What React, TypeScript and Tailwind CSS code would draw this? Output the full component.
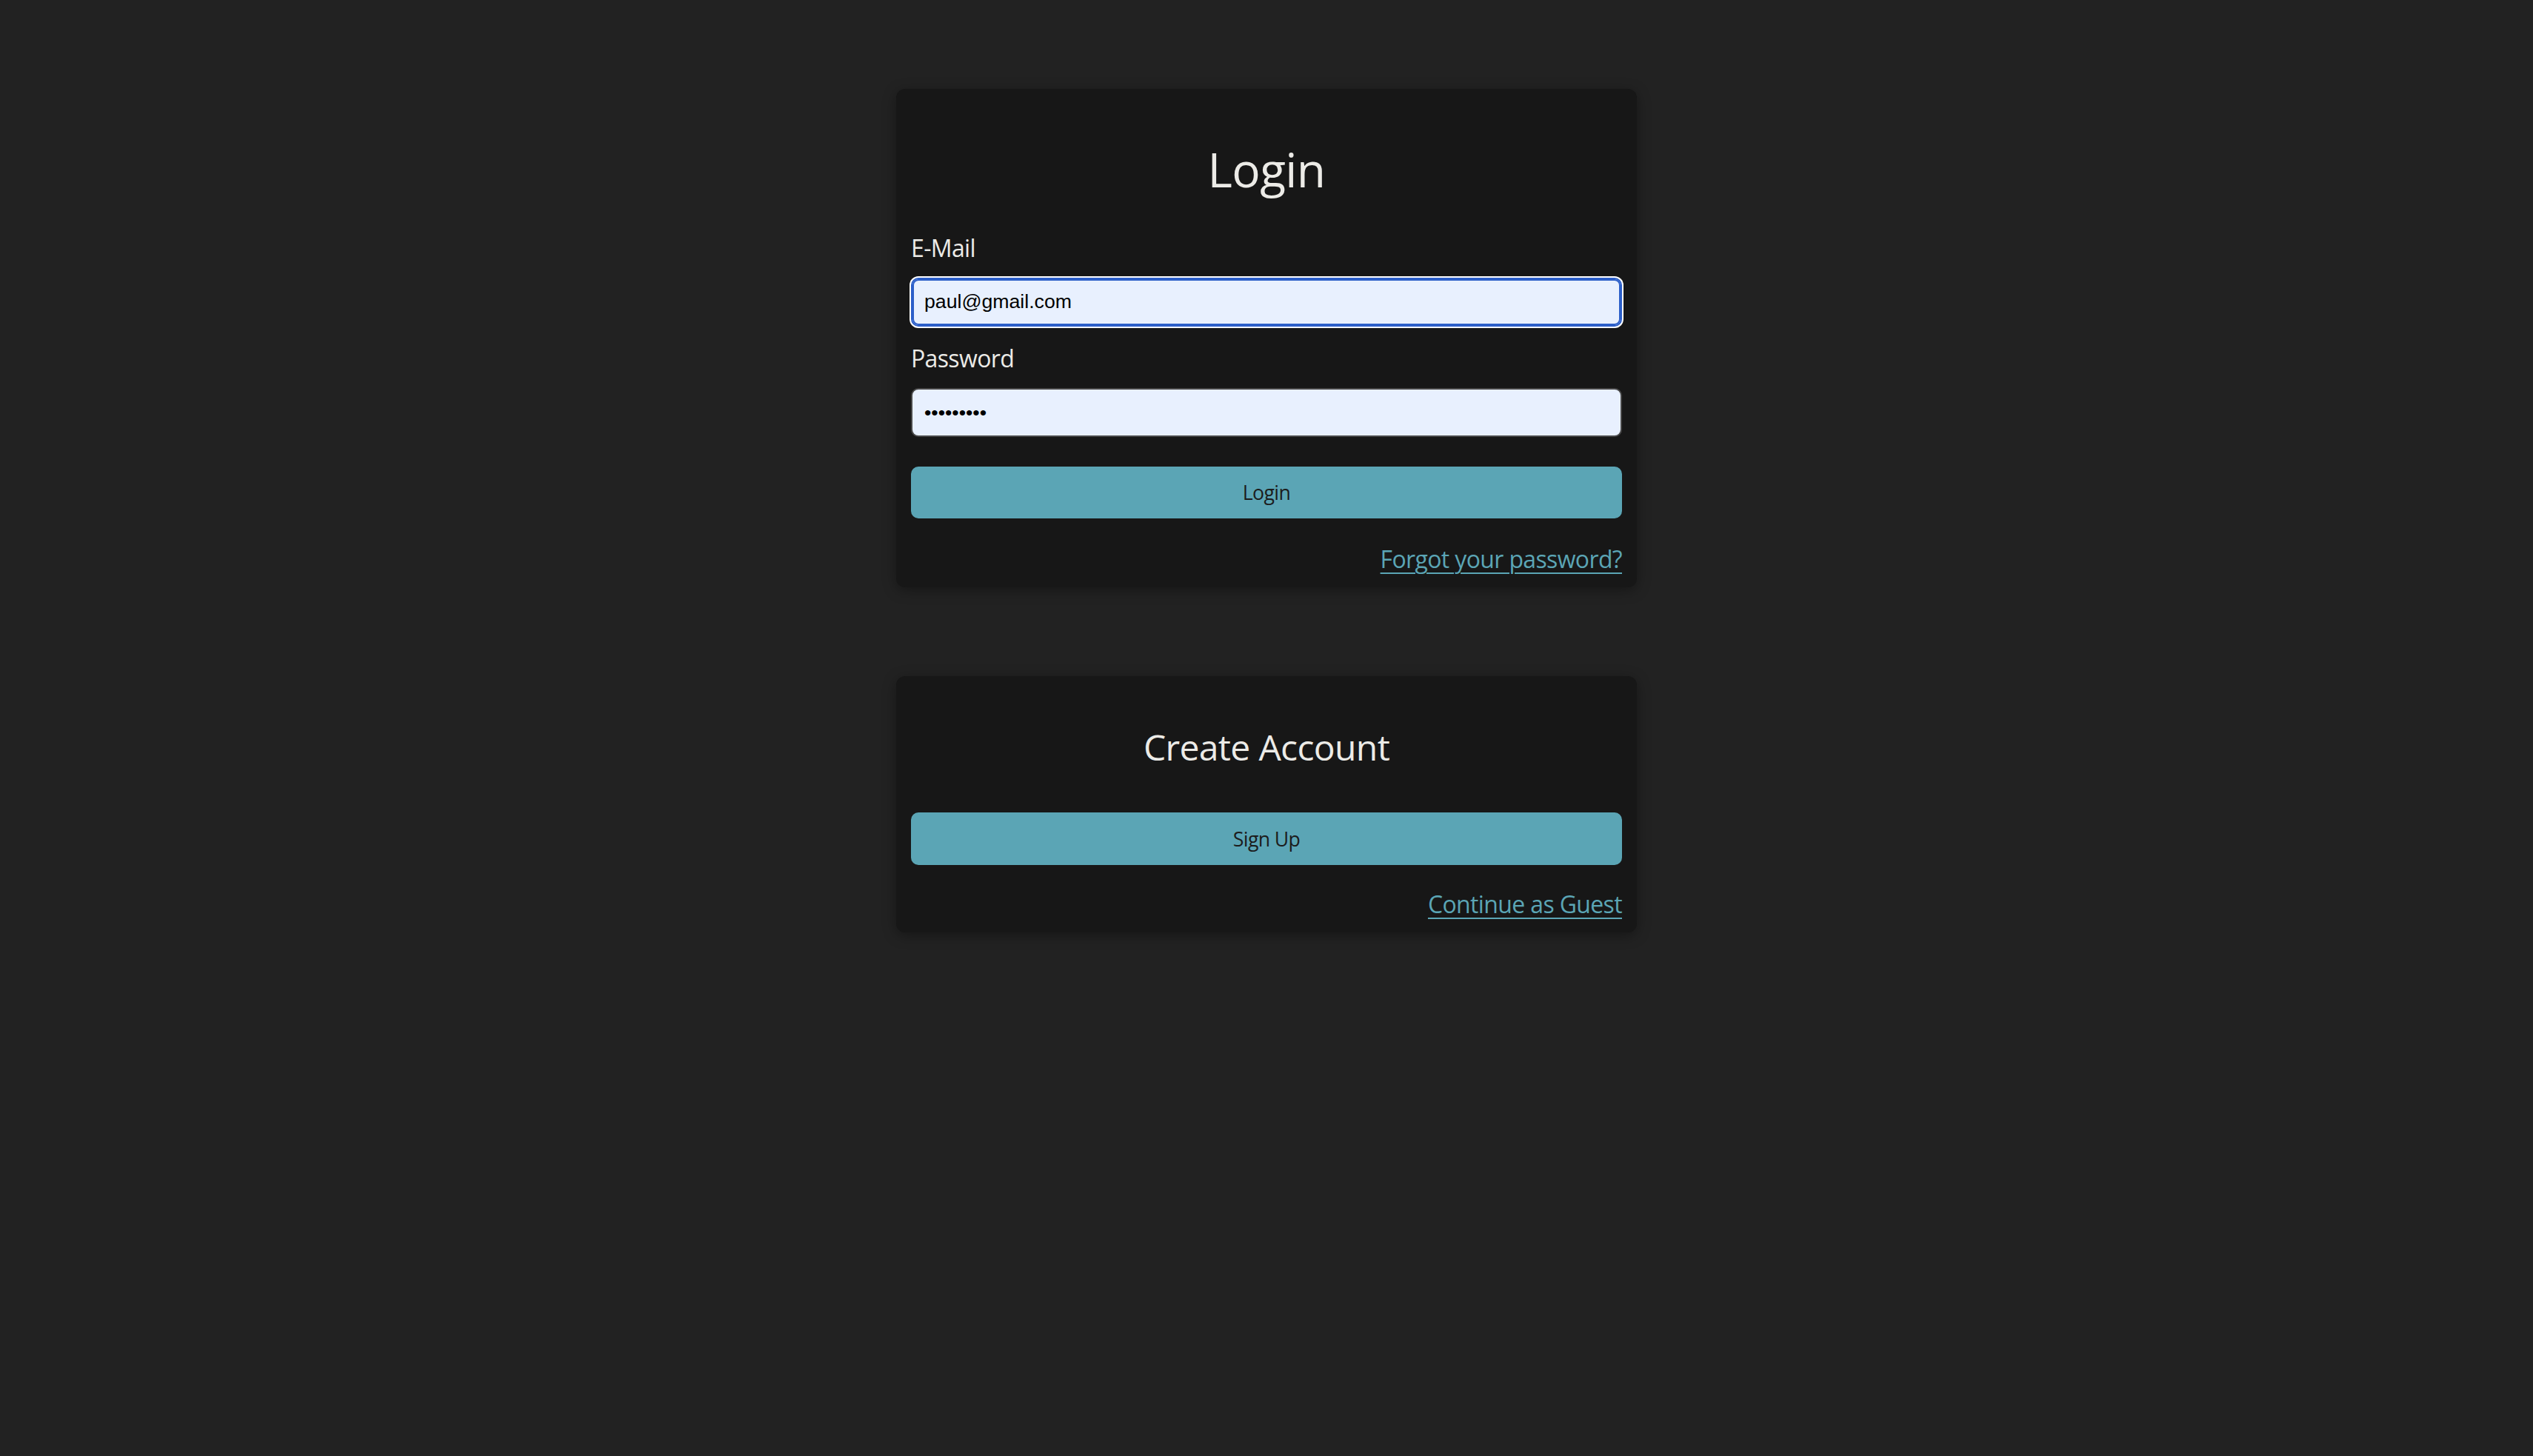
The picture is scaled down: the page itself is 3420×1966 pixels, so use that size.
const sans = "font-['Open_Sans',sans-serif] tracking-[-0.04em]";

export default function App() {
  return (
    <main className={`min-h-screen bg-[#222222] pt-[120px] ${sans}`}>
      {/* Login card */}
      <section className="mx-auto w-[1000px] rounded-[12px] bg-[#171717] px-5 pt-[69px] pb-[18px] shadow-[0_4px_18px_rgba(0,0,0,0.35)]">
        <h1 className="text-center text-[64px] leading-[80px] text-[#ecebe7]">Login</h1>

        <label className="mt-[46px] block text-[32px] leading-[40px] text-[#ecebe7]">E-Mail</label>
        <input
          type="email"
          readOnly
          value="paul@gmail.com"
          className="mt-[20px] block h-[66px] w-full rounded-[10px] border-2 border-[#2c5fc9] bg-[#e8f0fe] px-[16px] pb-[2px] font-['Liberation_Sans',Arial,sans-serif] text-[26.67px] tracking-normal text-black shadow-[0_0_0_2px_#ffffff,inset_0_0_0_2px_#2c5fc9] outline-none"
        />

        <label className="mt-[23px] block text-[32px] leading-[40px] text-[#ecebe7]">Password</label>
        <input
          type="password"
          readOnly
          value="123456789"
          className="mt-[20px] block h-[66px] w-full rounded-[10px] border-2 border-[#474747] bg-[#e8f0fe] px-[16px] font-['Liberation_Sans',Arial,sans-serif] text-[26.67px] tracking-normal text-black outline-none"
        />

        <button className="mt-[40px] block h-[70px] w-full rounded-[10px] bg-[#5ba5b5] text-[26.67px] text-[#1c1c1c]">
          Login
        </button>

        <div className="mt-[35px] flex justify-end">
          <a href="#" className="text-[32px] leading-[40px] text-[#5ba5b5] underline decoration-2 underline-offset-[6px]">
            Forgot your password?
          </a>
        </div>
      </section>

      {/* Sign up card */}
      <section className="mx-auto mt-[120px] w-[1000px] rounded-[12px] bg-[#171717] px-5 pt-[66px] pb-[18px] shadow-[0_4px_18px_rgba(0,0,0,0.35)]">
        <h2 className="text-center text-[48px] leading-[60px] text-[#ecebe7]">Create Account</h2>

        <button className="mt-[58px] block h-[71px] w-full rounded-[10px] bg-[#5ba5b5] text-[26.67px] text-[#1c1c1c]">
          Sign Up
        </button>

        <div className="mt-[33px] flex justify-end">
          <a href="#" className="text-[32px] leading-[40px] text-[#5ba5b5] underline decoration-2 underline-offset-[6px]">
            Continue as Guest
          </a>
        </div>
      </section>
    </main>
  );
}
